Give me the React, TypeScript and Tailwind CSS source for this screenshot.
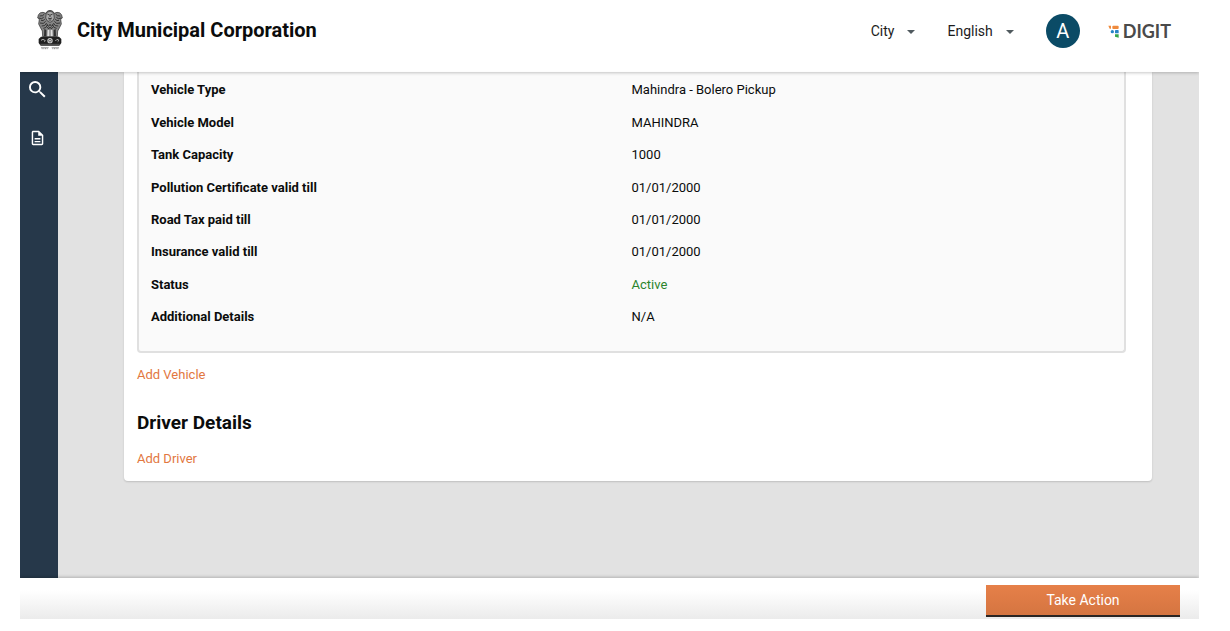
import type { ReactNode } from 'react';

const vehicleDetails: { label: string; value: string; tone?: string }[] = [
  { label: 'Vehicle Type', value: 'Mahindra - Bolero Pickup' },
  { label: 'Vehicle Model', value: 'MAHINDRA' },
  { label: 'Tank Capacity', value: '1000' },
  { label: 'Pollution Certificate valid till', value: '01/01/2000' },
  { label: 'Road Tax paid till', value: '01/01/2000' },
  { label: 'Insurance valid till', value: '01/01/2000' },
  { label: 'Status', value: 'Active', tone: 'text-[#2c842c]' },
  { label: 'Additional Details', value: 'N/A' },
];

function Emblem() {
  return (
    <svg viewBox="0 0 78 120" className="h-10 w-[26px]" role="img" aria-label="State emblem">
      <g fill="#858585" stroke="#2b2b2b" strokeWidth="2">
        <path d="M27 10 Q30 1 39 1 Q48 1 51 10 L60 7 Q70 6 74 15 L76 24 L71 28 L73 42 L67 54 L62 63 L61 80 H17 L16 63 L11 54 L5 42 L7 28 L2 24 L4 15 Q8 6 18 7 Z" />
        <path d="M28 8 Q39 -1 50 8 L52 24 Q48 36 39 37 Q30 36 26 24 Z" fill="#a8a8a8" />
      </g>
      <g fill="none" stroke="#1f1f1f" strokeWidth="2.4">
        <path d="M31 12 L37 15 M47 12 L41 15 M39 13 V21 M33 24 Q39 28 45 24 M35 30 H43" />
        <path d="M8 18 L17 17 L22 12 M5 24 L14 26 L20 22 M70 18 L61 17 L56 12 M73 24 L64 26 L58 22" />
        <path d="M12 31 Q20 35 23 27 M66 31 Q58 35 55 27 M9 39 Q20 44 26 34 M69 39 Q58 44 52 34" />
        <path d="M14 48 Q24 50 29 39 M64 48 Q54 50 49 39 M19 55 Q28 56 32 43 M59 55 Q50 56 46 43" />
        <path d="M29 44 L35 49 L39 43 L43 49 L49 44 M30 52 L36 56 L39 51 L42 56 L48 52" />
      </g>
      <path d="M22 57 L28 60 V79 H21 Z M50 60 L56 57 L57 79 H50 Z" fill="#303030" />
      <path d="M32 60 H37 V79 H31 Z M41 60 H46 L47 79 H41 Z" fill="#e0e0e0" />
      <path d="M12 80 H66 L73 87 V99 L67 107 H11 L5 99 V87 Z" fill="#202020" />
      <circle cx="39" cy="92" r="8" fill="#d0d0d0" />
      <circle cx="39" cy="92" r="4" fill="none" stroke="#333" strokeWidth="2" />
      <path d="M12 91 L18 88 L25 92 L22 95 M55 93 L60 88 L66 91 L62 95" fill="none" stroke="#b0b0b0" strokeWidth="3" />
      <path d="M10 103 H68" stroke="#777" strokeWidth="2" />
      <path d="M12 113 H35 M44 113 H66" stroke="#777" strokeWidth="2" />
      <path d="M14 116 H34 M46 116 H64" stroke="#888" strokeWidth="3" strokeDasharray="3 2" />
    </svg>
  );
}

function DigitMark() {
  return (
    <svg viewBox="0 0 33 39" className="h-[13px] w-[11px]" aria-hidden="true">
      <path d="M1 2 H9 V11 H5 Z" fill="#ef8a3c" />
      <rect x="13" y="2" width="19" height="10" rx="3" fill="#ef8a3c" />
      <circle cx="13" cy="20" r="5" fill="#2684c6" />
      <rect x="21" y="15" width="11" height="10" rx="2" fill="#2684c6" />
      <path d="M21 28 H32 V38 L21 35 Z" fill="#36a54a" />
    </svg>
  );
}

function HeaderMenu({ children }: { children: ReactNode }) {
  return (
    <button type="button" className="flex items-center gap-[13px] text-sm text-[#1c1c1c]">
      {children}
      <svg viewBox="0 0 10 5" className="mt-px h-1 w-2" aria-hidden="true">
        <path d="M0 0 H10 L5 5 Z" fill="#505a5f" />
      </svg>
    </button>
  );
}

function ActionLink({ children }: { children: ReactNode }) {
  return (
    <a href="#" className="self-start text-[13px] leading-5 text-[#e2773f]">
      {children}
    </a>
  );
}

export default function App() {
  return (
    <div className="flex min-h-screen flex-col bg-white pr-[31px] pb-3 pl-5 font-['Roboto','Liberation_Sans',sans-serif] text-[#0b0c0c]">
      <header className="z-10 flex h-[72px] items-start justify-between pt-[10px] pr-7 pl-[17px] shadow-[0_1px_3px_rgba(0,0,0,0.22)] [clip-path:inset(0_0_-6px_0)]">
        <div className="flex h-10 items-center gap-[14px]">
          <Emblem />
          <h1 className="text-xl font-bold">City Municipal Corporation</h1>
        </div>
        <div className="flex h-[42px] items-center">
          <div className="flex gap-8">
            <HeaderMenu>City</HeaderMenu>
            <HeaderMenu>English</HeaderMenu>
          </div>
          <button type="button" className="ml-8 flex size-[34px] items-center justify-center rounded-full bg-[#0b4b66] text-xl text-white">
            A
          </button>
          <div className="ml-7 flex items-center gap-1">
            <DigitMark />
            <span className="font-['Lato',sans-serif] text-lg leading-5 font-bold text-[#4a4a4a]">DIGIT</span>
          </div>
        </div>
      </header>

      <div className="flex flex-1 bg-[#e2e2e2]">
        <nav className="flex w-[38px] flex-col items-center gap-8 bg-[#26384a] pt-[9px] pr-[3px]">
          <a href="#" aria-label="Search">
            <svg viewBox="3 3 18 18" className="size-[17px]" fill="#fff" aria-hidden="true">
              <path d="M15.5 14h-.79l-.28-.27A6.471 6.471 0 0 0 16 9.5 6.5 6.5 0 1 0 9.5 16c1.61 0 3.09-.59 4.23-1.57l.27.28v.79l5 4.99L20.49 19l-4.99-5zm-6 0C7.01 14 5 11.99 5 9.5S7.01 5 9.5 5 14 7.01 14 9.5 11.99 14 9.5 14z" />
            </svg>
          </a>
          <a href="#" aria-label="Applications">
            <svg viewBox="3 1 18 22" className="h-4 w-[13px]" fill="#fff" aria-hidden="true">
              <path d="M8 16h8v2H8zm0-4h8v2H8zm6-10H6c-1.1 0-2 .9-2 2v16c0 1.1.89 2 1.99 2H18c1.1 0 2-.9 2-2V8l-6-6zm4 18H6V4h7v5h5v11z" />
            </svg>
          </a>
        </nav>

        <main className="flex-1 pr-[47px] pb-24 pl-[66px]">
          <section className="flex flex-col rounded-b bg-white pr-[26px] pb-3 pl-[13px] shadow-[0_1px_2px_rgba(0,0,0,0.16)]">
            <dl className="grid min-h-[281px] auto-rows-fr rounded-b border-2 border-t-0 border-[#e0e0e0] bg-[#fafafa] pt-[2px] pr-3 pb-[18px] pl-3 text-[13px]">
              {vehicleDetails.map(({ label, value, tone }) => (
                <div key={label} className="grid grid-cols-2 items-center">
                  <dt className="font-bold">{label}</dt>
                  <dd className={tone}>{value}</dd>
                </div>
              ))}
            </dl>
            <div className="mt-3 flex flex-col">
              <ActionLink>Add Vehicle</ActionLink>
              <h2 className="mt-6 mb-3 text-[19px] leading-7 font-bold">Driver Details</h2>
              <ActionLink>Add Driver</ActionLink>
            </div>
          </section>
        </main>
      </div>

      <footer className="z-10 flex h-[41px] items-start justify-end bg-linear-to-b from-white from-30% to-[#ebebeb] pt-[7px] pr-[19px] shadow-[0_-1px_3px_rgba(0,0,0,0.22)] [clip-path:inset(-6px_0_0_0)]">
        <button type="button" className="h-8 w-[194px] border-b-2 border-[#2b2523] bg-linear-to-b from-[#e68049] to-[#d57541] text-sm text-white">
          Take Action
        </button>
      </footer>
    </div>
  );
}
